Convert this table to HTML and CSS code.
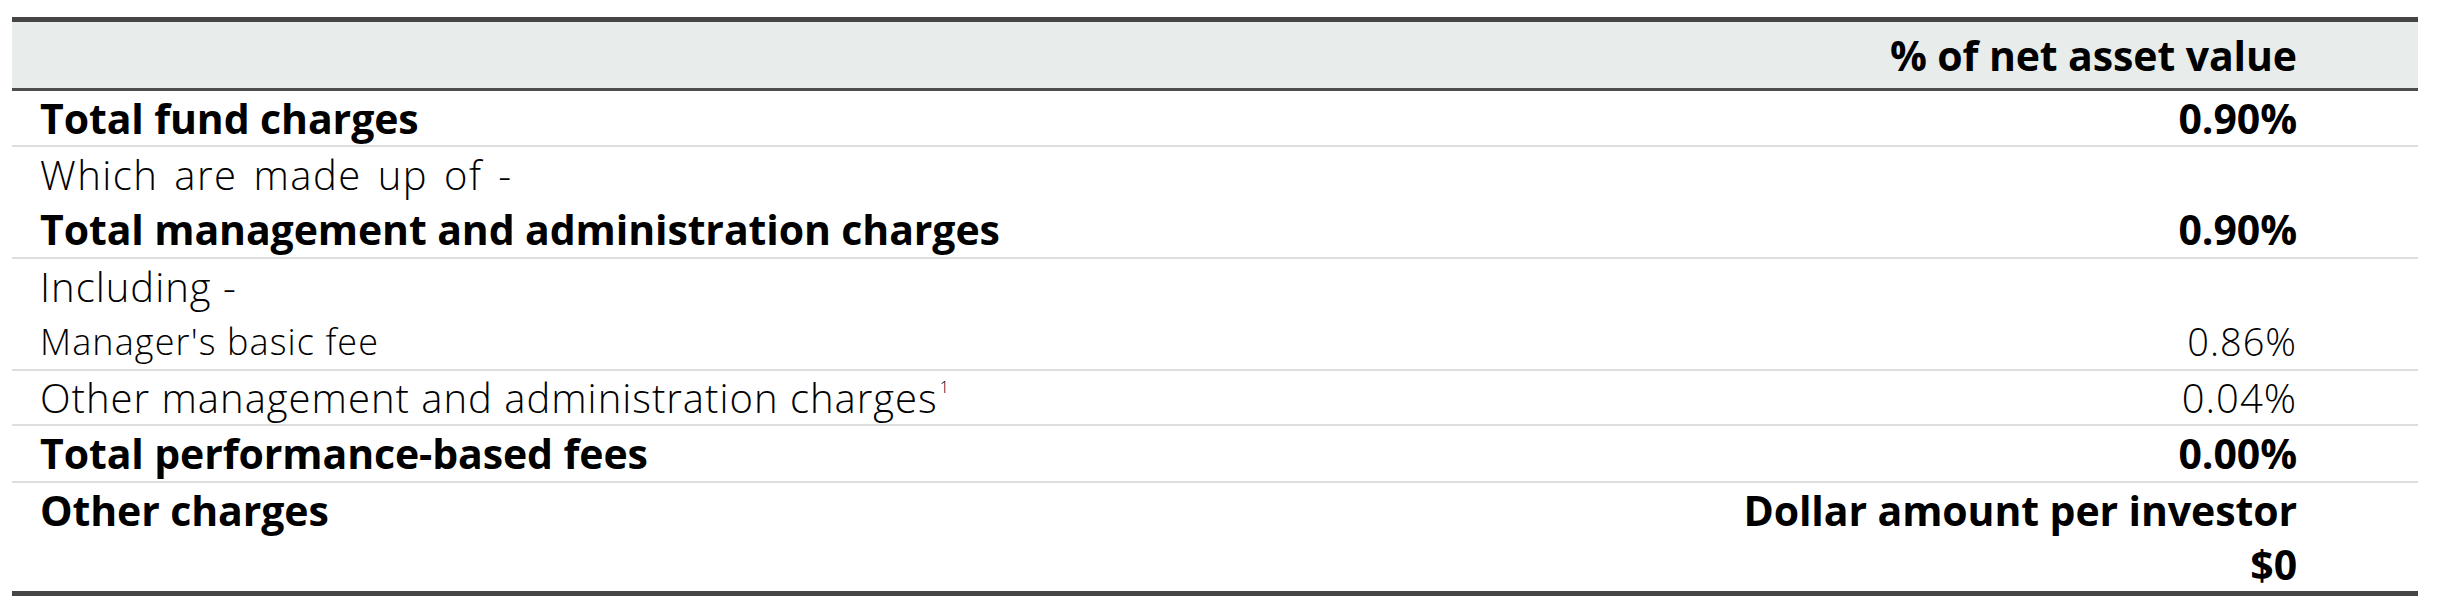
FILE: index.html
```html
<!DOCTYPE html>
<html lang="en">
<head>
<meta charset="utf-8">
<title>Fund charges</title>
<link rel="stylesheet" href="styles.css">
</head>
<body>
<div class="page">
  <table class="fees">
    <thead>
      <tr class="head">
        <th class="label"></th>
        <th class="val">% of net asset value</th>
      </tr>
    </thead>
    <tbody>
      <tr class="bold sep h54">
        <td class="label">Total fund charges</td>
        <td class="val">0.90%</td>
      </tr>
      <tr class="light h55">
        <td class="label wide">Which are made up of -</td>
        <td class="val"></td>
      </tr>
      <tr class="bold sep h55">
        <td class="label">Total management and administration charges</td>
        <td class="val">0.90%</td>
      </tr>
      <tr class="light h55">
        <td class="label">Including -</td>
        <td class="val"></td>
      </tr>
      <tr class="small sep h55">
        <td class="label">Manager's basic fee</td>
        <td class="val">0.86%</td>
      </tr>
      <tr class="light sep h53">
        <td class="label">Other management and administration charges<sup>1</sup></td>
        <td class="val">0.04%</td>
      </tr>
      <tr class="bold sep h55">
        <td class="label">Total performance-based fees</td>
        <td class="val">0.00%</td>
      </tr>
      <tr class="bold h54">
        <td class="label">Other charges</td>
        <td class="val">Dollar amount per investor</td>
      </tr>
      <tr class="bold last h54">
        <td class="label"></td>
        <td class="val">$0</td>
      </tr>
    </tbody>
  </table>
</div>
</body>
</html>
```
FILE: styles.css
```css
html, body {
  margin: 0;
  padding: 0;
  background: #ffffff;
}

.page {
  padding: 17px 20px 0 12px;
}

.fees {
  width: 100%;
  border-collapse: separate;
  border-spacing: 0;
  color: #000;
  font-family: "Open Sans", "Liberation Sans", sans-serif;
}

.fees th,
.fees td {
  padding: 0;
  vertical-align: middle;
  white-space: nowrap;
}

.fees .label {
  text-align: left;
  padding-left: 28px;
}

.fees .val {
  text-align: right;
  padding-right: 121px;
}

.head th {
  background: #e8eceb;
  border-top: 5px solid #454545;
  border-bottom: 3px solid #4d4d4d;
  height: 66px;
  font-weight: 700;
  font-size: 41px;
  letter-spacing: -0.1px;
}

.bold td {
  font-weight: 700;
  font-size: 41px;
  letter-spacing: -0.1px;
}

.light td {
  font-weight: 300;
  font-size: 40px;
  letter-spacing: 1px;
}

.light td.wide {
  word-spacing: 4px;
  letter-spacing: 1.5px;
}

.small td {
  font-weight: 300;
  font-size: 36px;
  letter-spacing: 1.1px;
}

.small td.val {
  font-size: 38px;
  letter-spacing: 1px;
}

.h53 td { line-height: 53px; }
.h54 td { line-height: 54px; }
.h55 td { line-height: 55px; }

.sep td {
  border-bottom: 2px solid #dcdfde;
}

.last td {
  border-bottom: 5px solid #454545;
}

sup {
  font-size: 16px;
  line-height: 0;
  vertical-align: 20px;
  margin-left: 2px;
}
```
